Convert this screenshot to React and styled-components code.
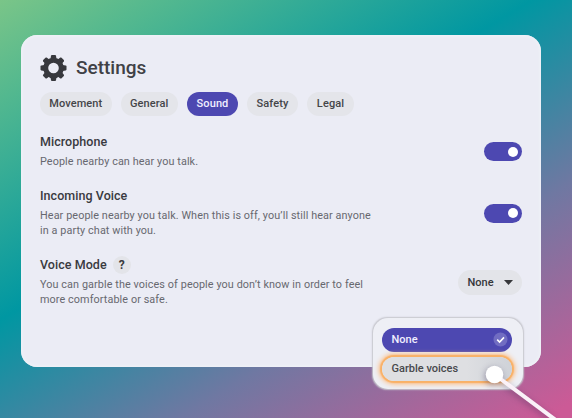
import React from 'react';
import styled, { createGlobalStyle } from 'styled-components';

const GlobalStyle = createGlobalStyle`
  * { box-sizing: border-box; }
  body { margin: 0; overflow: hidden; font-family: Roboto, "Liberation Sans", sans-serif; }
`;

const Page = styled.main`
  position: relative;
  width: 572px;
  height: 418px;
  padding: 35px 31px 0 21px;
  overflow: hidden;
  background: linear-gradient(149deg, #7ac588 0%, #53b88f 13%, #0097a2 42%, #6f78a2 69%, #cc5a96 98%);
`;

const Card = styled.section`
  height: 331.5px;
  padding: 19px 19px 0;
  border-radius: 16px;
  background: #ebecf5;
  box-shadow: inset 0 0 3px 1px #f0f3f8;
`;

const Header = styled.header`
  display: flex;
  align-items: center;
  gap: 9px;
  height: 28px;
  color: #37383d;
`;

const Title = styled.h1`
  margin: 0;
  font-size: 19px;
  line-height: 28px;
  font-weight: 500;
  color: #404146;
`;

const Tabs = styled.nav`
  display: flex;
  gap: 9px;
  margin-top: 9.5px;
`;

const Tab = styled.button`
  width: ${(p) => p.$width}px;
  height: 24px;
  padding: 0;
  border: 0;
  border-radius: 12px;
  font: 500 11px/24px Roboto, sans-serif;
  letter-spacing: 0.1px;
  color: ${(p) => (p.$active ? '#f1efff' : '#444549')};
  background: ${(p) => (p.$active ? '#4d48b1' : '#e4e5ea')};
`;

const Setting = styled.div`
  display: flex;
  justify-content: space-between;
  margin-top: ${(p) => p.$gap}px;
  height: ${(p) => p.$height}px;
`;

const Name = styled.h2`
  display: flex;
  align-items: center;
  gap: 6px;
  margin: 0 0 4px;
  height: 16px;
  font-size: 12.5px;
  line-height: 16px;
  font-weight: 500;
  letter-spacing: 0.05px;
  color: #393a3f;
`;

const Description = styled.p`
  margin: 0;
  font-size: 10.8px;
  line-height: 15.4px;
  letter-spacing: 0.1px;
  color: #67686f;
  white-space: pre-line;
`;

const Help = styled.span`
  width: 18px;
  height: 18px;
  border-radius: 50%;
  background: #e3e4e9;
  font-size: 12px;
  line-height: 18px;
  font-weight: 700;
  text-align: center;
`;

const Switch = styled.span`
  display: flex;
  align-items: center;
  justify-content: flex-end;
  width: 38px;
  height: 19px;
  margin-top: ${(p) => p.$top}px;
  padding-right: 4.5px;
  border-radius: 10px;
  background: #4d48b1;
`;

const Knob = styled.span`
  width: 10px;
  height: 10px;
  border-radius: 50%;
  background: #fff;
`;

const Select = styled.button`
  display: flex;
  align-items: center;
  justify-content: space-between;
  width: 64px;
  height: 25px;
  margin-top: ${(p) => p.$top}px;
  padding: 0 9.5px;
  border: 0;
  border-radius: 13px;
  background: #e3e4e9;
  color: #36373b;
  font: 500 11px/25px Roboto, sans-serif;
`;

const Menu = styled.div`
  position: absolute;
  left: 372.5px;
  top: 317.5px;
  display: flex;
  flex-direction: column;
  gap: 5px;
  width: 150px;
  height: 71.5px;
  padding: 10px 10.5px 0 9px;
  border-radius: 15px;
  background: #eeeff5;
  box-shadow: 0 0 1.5px 0.3px #c6c6cd;
`;

const Option = styled.div`
  display: flex;
  align-items: center;
  justify-content: space-between;
  height: 24px;
  padding: 0 4px 0 10px;
  border-radius: 12px;
  font-size: 11px;
  line-height: 24px;
  font-weight: 500;
  color: ${(p) => (p.$selected ? '#f1efff' : '#47484c')};
  background: ${(p) => (p.$selected ? '#4d48b1' : 'linear-gradient(90deg, #dedfe2 65%, #cfd2d8)')};
  box-shadow: ${(p) => (p.$selected ? 'none' : '0 0 1px 2px #f9b167, 0 0 5px 3px #fdba7b')};
`;

const Pointer = styled.svg`
  position: absolute;
  left: 472px;
  top: 350px;
  filter: drop-shadow(-1px 2px 3px rgba(50, 40, 80, 0.4));
`;

const tabs = [
  { label: 'Movement', width: 71.5 },
  { label: 'General', width: 57.5 },
  { label: 'Sound', width: 51, active: true },
  { label: 'Safety', width: 51 },
  { label: 'Legal', width: 47 },
];

const teeth = [0, 45, 90, 135, 180, 225, 270, 315];

function Gear() {
  return (
    <svg width="27" height="28" viewBox="-13.5 -14 27 28">
      {teeth.map((a) => (
        <path key={a} d="M-3-9 L-2.5-12.2 Q-2.3-13 -1.6-13 H1.6 Q2.3-13 2.5-12.2 L3-9Z" fill="currentColor" transform={`rotate(${a})`} />
      ))}
      <circle r="7.8" fill="none" stroke="currentColor" strokeWidth="5" />
    </svg>
  );
}

export default function App() {
  return (
    <>
      <GlobalStyle />
      <Page>
        <Card>
          <Header>
            <Gear />
            <Title>Settings</Title>
          </Header>
          <Tabs>
            {tabs.map((t) => (
              <Tab key={t.label} $width={t.width} $active={t.active}>{t.label}</Tab>
            ))}
          </Tabs>
          <Setting $gap={18.5} $height={36}>
            <div>
              <Name>Microphone</Name>
              <Description>People nearby can hear you talk.</Description>
            </div>
            <Switch $top={8}><Knob /></Switch>
          </Setting>
          <Setting $gap={18} $height={52}>
            <div>
              <Name>Incoming Voice</Name>
              <Description>{'Hear people nearby you talk. When this is off, you’ll still hear anyone\nin a party chat with you.'}</Description>
            </div>
            <Switch $top={15.5}><Knob /></Switch>
          </Setting>
          <Setting $gap={17} $height={52}>
            <div>
              <Name>Voice Mode <Help>?</Help></Name>
              <Description>{'You can garble the voices of people you don’t know in order to feel\nmore comfortable or safe.'}</Description>
            </div>
            <Select $top={12.5}>
              None
              <svg width="9" height="5" viewBox="0 0 9 5"><path d="M0 0H9L4.5 5Z" fill="currentColor" /></svg>
            </Select>
          </Setting>
        </Card>
        <Menu>
          <Option $selected>
            None
            <svg width="15" height="15" viewBox="0 0 15 15">
              <circle cx="7.5" cy="7.5" r="7" fill="#716dc2" />
              <path d="M4.2 7.7 6.6 10 11 5.4" fill="none" stroke="#fff" strokeWidth="1.6" />
            </svg>
          </Option>
          <Option>Garble voices</Option>
        </Menu>
        <Pointer width="100" height="68" viewBox="0 0 100 68">
          <path d="M22.5 24.5 85 71" stroke="#faf1f8" strokeWidth="4" />
          <circle cx="22.5" cy="24.5" r="8.8" fill="#fff" />
        </Pointer>
      </Page>
    </>
  );
}
